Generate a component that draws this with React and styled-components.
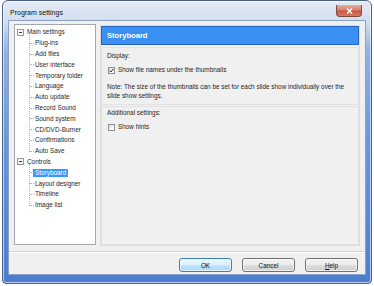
import React from 'react';
import styled, { createGlobalStyle } from 'styled-components';

const tree = [
  {
    label: 'Main settings',
    children: [
      'Plug-ins',
      'Add files',
      'User interface',
      'Temporary folder',
      'Language',
      'Auto update',
      'Record Sound',
      'Sound system',
      'CD/DVD-Burner',
      'Confirmations',
      'Auto Save',
    ],
  },
  {
    label: 'Controls',
    children: ['Storyboard', 'Layout designer', 'Timeline', 'Image list'],
  },
];

const selected = 'Storyboard';

const CheckMark = () => (
  <svg width="5" height="5" viewBox="0 0 5 5">
    <path d="M0.6 2.6 L1.9 4 L4.4 0.8" fill="none" stroke="#2b2b2b" strokeWidth="1" />
  </svg>
);

const Check = ({ checked, children }) => (
  <CheckRow>
    <CheckBox>{checked && <CheckMark />}</CheckBox>
    <span>{children}</span>
  </CheckRow>
);

const App = () => {
  return (
    <>
      <GlobalStyle />
      <Window>
        <TitleBar>
          <Title>Program settings</Title>
          <CloseBtn>
            <svg width="7" height="6" viewBox="0 0 7 6">
              <path d="M1 0.5 L6 5.5 M6 0.5 L1 5.5" stroke="#fff" strokeWidth="1.4" />
            </svg>
          </CloseBtn>
        </TitleBar>
        <Client>
          <Main>
            <TreeBox>
              {tree.map(group => (
                <div key={group.label}>
                  <ParentRow>
                    <Expander />
                    <Label>{group.label}</Label>
                  </ParentRow>
                  <ChildList>
                    {group.children.map(c => (
                      <ChildRow key={c}>
                        <Label $selected={c === selected}>{c}</Label>
                      </ChildRow>
                    ))}
                  </ChildList>
                </div>
              ))}
            </TreeBox>
            <Panel>
              <Header>Storyboard</Header>
              <Section>
                <Caption>Display:</Caption>
                <Check checked>Show file names under the thumbnails</Check>
                <Note>
                  Note: The size of the thumbnails can be set for each slide show individually over the
                  slide show settings.
                </Note>
              </Section>
              <Section $grow>
                <Caption>Additional settings:</Caption>
                <Check>Show hints</Check>
              </Section>
            </Panel>
          </Main>
          <Separator />
          <ButtonRow>
            <Button $default>OK</Button>
            <Button>Cancel</Button>
            <Button>
              <u>H</u>elp
            </Button>
          </ButtonRow>
        </Client>
      </Window>
    </>
  );
};

export default App;

const GlobalStyle = createGlobalStyle`
  body {
    margin: 0;
    background: #ffffff;
    font-family: "Liberation Sans", Arial, sans-serif;
    font-size: 6.4px;
    color: #1f1f1f;
  }
`;

const Window = styled.div`
  box-sizing: border-box;
  display: flex;
  flex-direction: column;
  width: 370px;
  height: 284px;
  margin-left: 2px;
  border: 1px solid #4d6283;
  border-radius: 6px 6px 4px 4px;
  background: linear-gradient(
    180deg,
    #e3ebf5 0px,
    #d0ddef 22px,
    #8fb1e3 50px,
    #6c96dc 140px,
    #4c7dd1 100%
  );
  box-shadow: inset 0 0 0 1px rgba(255, 255, 255, 0.6);
  padding: 0 5px 8px 5px;
`;

const TitleBar = styled.div`
  display: flex;
  align-items: flex-start;
  justify-content: space-between;
  height: 21px;
  padding-left: 2px;
`;

const Title = styled.span`
  margin-top: 7px;
  font-size: 7px;
  color: #111;
  line-height: 9px;
`;

const CloseBtn = styled.div`
  display: flex;
  align-items: center;
  justify-content: center;
  width: 24px;
  height: 11px;
  margin-top: 4px;
  margin-right: 4px;
  border: 1px solid #7a4a44;
  border-top: none;
  border-radius: 0 0 4px 4px;
  background: linear-gradient(180deg, #e6b0a2 0%, #d8806e 45%, #c9563f 55%, #dc7a60 100%);
`;

const Client = styled.div`
  flex: 1;
  display: flex;
  flex-direction: column;
  background: #f0f0f0;
  border: 1px solid #8ba2c3;
  padding: 3px 5px 2px 5px;
`;

const Main = styled.div`
  display: flex;
  gap: 4px;
  height: 221px;
`;

const TreeBox = styled.div`
  width: 82px;
  box-sizing: border-box;
  background: #ffffff;
  border: 1px solid #a3a7ae;
  padding-top: 2px;
`;

const ParentRow = styled.div`
  display: flex;
  align-items: center;
  height: 10.8px;
  padding-left: 2px;
`;

const Expander = styled.span`
  position: relative;
  box-sizing: border-box;
  width: 7px;
  height: 7px;
  margin-right: 1px;
  border: 1px solid #979797;
  background: #fafafa;

  &::after {
    content: '';
    position: absolute;
    left: 1px;
    right: 1px;
    top: 2px;
    height: 1px;
    background: #3b3b3b;
  }
`;

const ChildList = styled.div`
  position: relative;

  &::before {
    content: '';
    position: absolute;
    left: 14px;
    top: -3px;
    bottom: 5px;
    border-left: 1px dotted #b4b4b4;
  }
`;

const ChildRow = styled.div`
  position: relative;
  display: flex;
  align-items: center;
  height: 10.8px;
  padding-left: 18px;

  &::before {
    content: '';
    position: absolute;
    left: 15px;
    width: 4px;
    top: 5px;
    border-top: 1px dotted #b4b4b4;
  }
`;

const Label = styled.span`
  padding: 0 2px;
  line-height: 8px;
  white-space: nowrap;
  background: ${p => (p.$selected ? '#3399ff' : 'transparent')};
  color: ${p => (p.$selected ? '#ffffff' : '#1f1f1f')};
`;

const Panel = styled.div`
  flex: 1;
  display: flex;
  flex-direction: column;
  margin-top: 1px;
  margin-bottom: -1px;
  border: 1px solid #dcdcdc;
`;

const Header = styled.div`
  height: 19px;
  box-sizing: border-box;
  display: flex;
  align-items: center;
  padding-left: 5px;
  background: #3a8ff2;
  border: 1px solid #2566bf;
  color: #ffffff;
  font-size: 7.6px;
  font-weight: 700;
`;

const Section = styled.div`
  display: flex;
  flex-direction: column;
  flex: ${p => (p.$grow ? 1 : 'none')};
  margin-top: ${p => (p.$grow ? '1px' : '2px')};
  padding: ${p => (p.$grow ? '1px' : '3px')} 5px 4px 5px;
  border: 1px solid #e2e2e2;
`;

const Caption = styled.div`
  line-height: 10px;
`;

const CheckRow = styled.div`
  display: flex;
  align-items: center;
  gap: 3px;
  margin-top: 4px;
  margin-left: 1px;
  line-height: 10px;
`;

const CheckBox = styled.span`
  display: flex;
  align-items: center;
  justify-content: center;
  box-sizing: border-box;
  width: 7px;
  height: 7px;
  border: 1px solid #8e8f8f;
  background: linear-gradient(135deg, #dcdcdc 0%, #f4f4f4 60%, #ffffff 100%);
`;

const Note = styled.p`
  margin: 7px 0 0 0;
  line-height: 9px;
`;

const Separator = styled.div`
  margin-top: 6px;
  margin-left: -5px;
  margin-right: -5px;
  border-top: 1px solid #d5d5d5;
  border-bottom: 1px solid #ffffff;
`;

const ButtonRow = styled.div`
  display: flex;
  justify-content: flex-end;
  gap: 10px;
  margin-top: 5px;
  padding-right: 2px;
`;

const Button = styled.button`
  width: 53px;
  height: 14px;
  padding: 0;
  font-family: inherit;
  font-size: 6.4px;
  color: #111;
  border-radius: 3px;
  border: 1px solid ${p => (p.$default ? '#3c7fb1' : '#707070')};
  background: ${p =>
    p.$default
      ? 'linear-gradient(180deg, #eaf6fd 0%, #d9f0fc 50%, #bee6fd 51%, #a7d9f5 100%)'
      : 'linear-gradient(180deg, #f2f2f2 0%, #ebebeb 50%, #dddddd 51%, #cfcfcf 100%)'};
  box-shadow: inset 0 0 0 1px rgba(255, 255, 255, 0.7);
`;
